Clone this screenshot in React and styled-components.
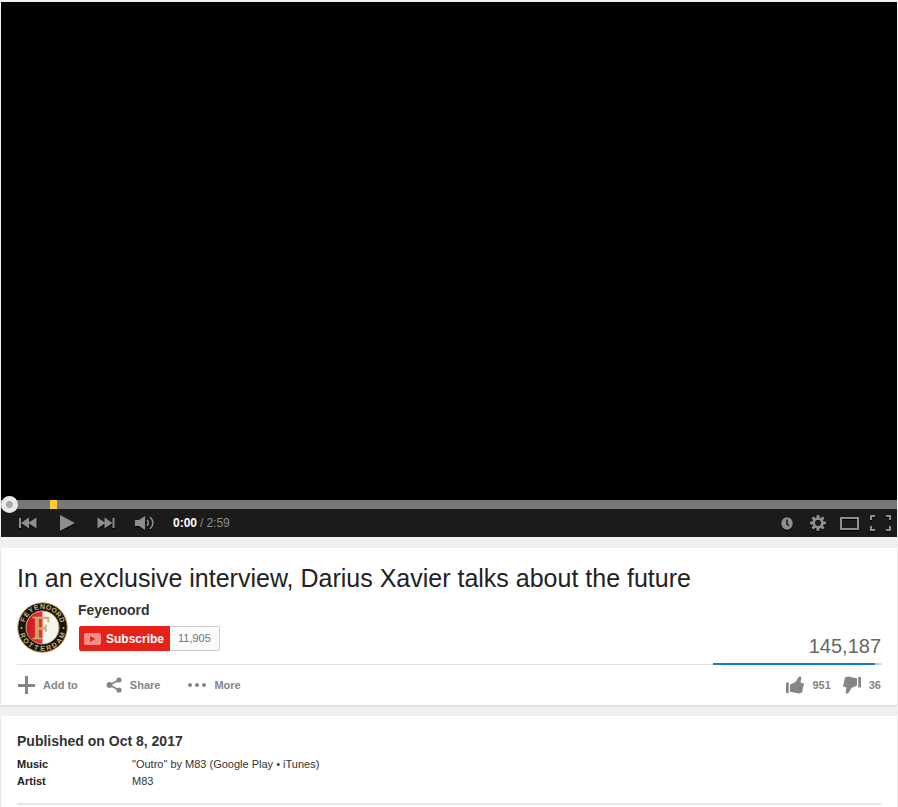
import React, { useState } from 'react';
import styled, { createGlobalStyle } from 'styled-components';

const GlobalStyle = createGlobalStyle`
  * {
    box-sizing: border-box;
  }
  body {
    margin: 0;
    background: #f0f0f0;
    color: #222;
    font-family: "Liberation Sans", Arial, Helvetica, sans-serif;
    font-size: 11px;
  }
`;

const Page = styled.main`
  display: flex;
  flex-direction: column;
  min-height: 100vh;
  padding: 2px 1px 0;
`;

/* ---------- player ---------- */

const Player = styled.section`
  background: #000;
  margin-bottom: 11px;
`;

const Screen = styled.div`
  aspect-ratio: 896 / 498;
  background: #000;
`;

const SeekBar = styled.div`
  position: relative;
  height: 9px;
  background: #777;
`;

const Marker = styled.span`
  position: absolute;
  top: 0;
  width: 7px;
  height: 9px;
  background: #fc3;
`;

const Seek = styled.input`
  position: absolute;
  top: -4px;
  left: 0;
  width: 100%;
  height: 17px;
  margin: 0;
  background: transparent;
  appearance: none;
  cursor: pointer;

  &::-webkit-slider-thumb {
    appearance: none;
    width: 17px;
    height: 17px;
    border-radius: 50%;
    background: radial-gradient(circle, #aaa 0 3px, #eaeaea 4px);
  }
`;

const Controls = styled.div`
  display: flex;
  align-items: center;
  justify-content: space-between;
  height: 28px;
  padding: 0 6px 0 16px;
  background: #1b1b1b;
`;

const ControlGroup = styled.div`
  display: flex;
  align-items: center;
  gap: ${props => props.$gap}px;
`;

const IconButton = styled.button`
  display: flex;
  align-items: center;
  justify-content: center;
  width: 22px;
  height: 28px;
  padding: 0;
  border: 0;
  background: none;
  color: #8e8e8e;
  cursor: pointer;

  svg {
    filter: drop-shadow(0 1px 0 #000);
  }
`;

const Time = styled.div`
  display: flex;
  gap: 3px;
  font-size: 12px;
  line-height: 28px;
  color: #8e8e8e;

  b {
    color: #fff;
  }
`;

/* ---------- cards ---------- */

const Card = styled.section`
  padding: 15px 16px 0;
  background: #fff;
  box-shadow: 0 1px 2px rgba(0, 0, 0, 0.12);
`;

const Details = styled(Card)`
  flex: 1;
  margin-top: 11px;
  padding-top: 16px;
`;

const Title = styled.h1`
  margin: 0 0 9px;
  font-size: 25px;
  font-weight: normal;
  line-height: 30px;
`;

const Header = styled.div`
  display: flex;
  align-items: flex-end;
  justify-content: space-between;
  border-bottom: 1px solid #e0e0e0;
`;

const Owner = styled.div`
  display: flex;
  gap: 10px;
  padding-bottom: 11px;
`;

const OwnerName = styled.a`
  display: block;
  margin-bottom: 8px;
  font-size: 14px;
  font-weight: bold;
  line-height: 16px;
  color: #333;
  text-decoration: none;
`;

const SubscribeRow = styled.div`
  display: flex;
  padding-left: 1px;
`;

const Subscribe = styled.button`
  display: flex;
  align-items: center;
  gap: 5px;
  height: 25px;
  padding: 0 6px 0 5px;
  border: 0;
  border-radius: 2px 0 0 2px;
  background: #e62117;
  color: #fff;
  font-family: inherit;
  font-size: 12px;
  font-weight: bold;
  cursor: pointer;
`;

const SubCount = styled.span`
  height: 25px;
  padding: 0 8px;
  border: 1px solid #ccc;
  border-left: 0;
  border-radius: 0 2px 2px 0;
  background: #fafafa;
  color: #737373;
  line-height: 23px;
`;

const Stats = styled.div`
  width: 168px;
  margin-bottom: -1px;
`;

const Views = styled.div`
  margin-bottom: 5px;
  font-size: 20px;
  line-height: 24px;
  color: #666;
  text-align: right;
`;

const Sentiment = styled.div`
  height: 2px;
  background: #ccc;
`;

const Likes = styled.div`
  height: 2px;
  background: #167ac6;
`;

const Actions = styled.div`
  display: flex;
  align-items: center;
  justify-content: space-between;
  height: 40px;
`;

const ActionGroup = styled.div`
  display: flex;
  gap: ${props => props.$gap}px;
`;

const Action = styled.button`
  display: flex;
  align-items: center;
  gap: 8px;
  height: 24px;
  padding: 0;
  border: 0;
  background: none;
  color: #858585;
  font-family: inherit;
  font-size: 11px;
  font-weight: bold;
  cursor: pointer;
`;

const Published = styled.h2`
  margin: 0 0 6px;
  font-size: 14px;
  line-height: 18px;
  color: #333;
`;

const Meta = styled.dl`
  display: grid;
  grid-template-columns: 115px 1fr;
  margin: 0 0 13px;
  line-height: 17px;

  dt {
    font-weight: bold;
  }
  dd {
    margin: 0;
    color: #333;
  }
`;

const Divider = styled.hr`
  height: 2px;
  margin: 0 0 3px;
  border: 0;
  background: #e6e6e6;
`;

/* ---------- icons ---------- */

const PrevIcon = () => (
  <svg width="18" height="12" fill="currentColor" aria-hidden="true">
    <path d="M0 1h2v10H0zM2 6l8-5.5v11zM9 6l8.500-5.500v11z" />
  </svg>
);

const NextIcon = () => (
  <svg width="18" height="12" fill="currentColor" aria-hidden="true">
    <path d="M15.500 1h2v10h-2zM15.500 6l-8-5.500v11zM8.500 6L.5.5v11z" />
  </svg>
);

const PlayIcon = () => (
  <svg width="15" height="16" fill="currentColor" aria-hidden="true">
    <path d="M0 0l15 8-15 8z" />
  </svg>
);

const VolumeIcon = () => (
  <svg width="20" height="14" fill="currentColor" aria-hidden="true">
    <path d="M0 4h4l6-4v14l-6-4H0z" />
    <path d="M12 4q2.500 3 0 6M15 1q6 6 0 12" fill="none" stroke="currentColor" strokeWidth="1.600" />
  </svg>
);

const ClockIcon = () => (
  <svg width="12" height="13" aria-hidden="true">
    <ellipse cx="6" cy="6.500" rx="5.700" ry="6.200" fill="currentColor" />
    <path d="M6 2.500v4.500l1.800 2" fill="none" stroke="#1b1b1b" strokeWidth="1.600" />
  </svg>
);

const GearIcon = () => (
  <svg width="16" height="16" viewBox="-8 -8 16 16" aria-hidden="true">
    <circle r="4.300" fill="none" stroke="currentColor" strokeWidth="2.800" />
    {[0, 45, 90, 135, 180, 225, 270, 315].map(a => (
      <path key={a} d="M-1.700-5L-1.200-8h2.400l.5 3z" fill="currentColor" transform={`rotate(${a})`} />
    ))}
  </svg>
);

const TheaterIcon = () => (
  <svg width="19" height="13" aria-hidden="true">
    <rect x="1" y="1" width="17" height="11" fill="none" stroke="currentColor" strokeWidth="2" />
  </svg>
);

const FullscreenIcon = () => (
  <svg width="21" height="16" fill="none" stroke="currentColor" strokeWidth="2" aria-hidden="true">
    <path d="M1 5V1h4M16 1h4v4M20 11v4h-4M5 15H1v-4" />
  </svg>
);

const PlusIcon = () => (
  <svg width="18" height="18" fill="currentColor" aria-hidden="true">
    <path d="M8 0h3v8h7v3h-7v7H8v-7H1V8h7z" />
  </svg>
);

const ShareIcon = () => (
  <svg width="16" height="16" fill="currentColor" aria-hidden="true">
    <path d="M13 3L3.500 8l9.500 5" fill="none" stroke="currentColor" strokeWidth="1.800" />
    <circle cx="13" cy="3" r="2.600" />
    <circle cx="3.500" cy="8" r="2.900" />
    <circle cx="13" cy="13" r="2.600" />
  </svg>
);

const MoreIcon = () => (
  <svg width="18" height="4" fill="currentColor" aria-hidden="true">
    <circle cx="2" cy="2" r="2" />
    <circle cx="9" cy="2" r="2" />
    <circle cx="16" cy="2" r="2" />
  </svg>
);

const ThumbIcon = ({ down }) => (
  <svg width="18" height="18" fill="currentColor" aria-hidden="true">
    <path
      d="M0 6.500h2.800v10.500H0zM4 8.500L9.500 6 13 .5l2.500.3-1 5.700 3.500 1-2 9-3 1-9-1.700z"
      transform={down ? 'rotate(180 9 9)' : undefined}
    />
  </svg>
);

const SubscribeIcon = () => (
  <svg width="17" height="12" aria-hidden="true">
    <rect width="17" height="12" rx="2" fill="#f58f8a" />
    <path d="M6 3l5.500 3L6 9z" fill="#e62117" />
  </svg>
);

// letters stand one by one round the ring, 17 degrees apart
const Crest = () => (
  <svg width="51" height="51" viewBox="0 0 51 51" role="img" aria-label="Feyenoord Rotterdam">
    <defs>
      <linearGradient id="gold" x1="0" y1="0" x2="1" y2="1">
        <stop offset="0" stopColor="#e6cf96" />
        <stop offset="0.500" stopColor="#b08d45" />
        <stop offset="1" stopColor="#dcc182" />
      </linearGradient>
      <linearGradient id="red" x1="0" y1="0" x2="1" y2="0">
        <stop offset="0" stopColor="#c8151d" />
        <stop offset="1" stopColor="#e8343b" />
      </linearGradient>
    </defs>
    <circle cx="25.500" cy="25.500" r="24.800" fill="#17140f" stroke="url(#gold)" strokeWidth="1" />
    <circle cx="25.500" cy="25.500" r="16.500" fill="#f6f4f1" />
    <path d="M25.500 9a16.500 16.500 0 0 0 0 33z" fill="url(#red)" />
    <circle cx="25.500" cy="25.500" r="16.500" fill="none" stroke="url(#gold)" strokeWidth="1" />
    <g fill="#c9b27b" fontFamily="Liberation Sans, sans-serif" fontWeight="bold" fontSize="7" textAnchor="middle">
      {'FEYENOORD'.split('').map((letter, i) => (
        <text key={i} x="25.500" y="7" transform={`rotate(${(i - 4) * 17} 25.500 25.500)`}>{letter}</text>
      ))}
      {'ROTTERDAM'.split('').map((letter, i) => (
        <text key={i} x="25.500" y="49" transform={`rotate(${(4 - i) * 17} 25.500 25.500)`}>{letter}</text>
      ))}
    </g>
    <circle cx="4.500" cy="26" r="1" fill="#d5bd82" />
    <circle cx="46.500" cy="26" r="1" fill="#d5bd82" />
    <text
      x="24"
      y="37"
      fill="#c9a860"
      stroke="#d3b574"
      strokeWidth="0.500"
      fontFamily="Liberation Serif, serif"
      fontSize="33"
      textAnchor="middle"
    >
      F
    </text>
  </svg>
);

const video = {
  title: 'In an exclusive interview, Darius Xavier talks about the future',
  likes: 951,
  dislikes: 36
};

function App() {
  const [position, setPosition] = useState(0);
  const likeShare = (video.likes / (video.likes + video.dislikes)) * 100;
  const seconds = String(position % 60).padStart(2, '0');

  return (
    <>
      <GlobalStyle />
      <Page>
        <Player>
          <Screen />
          <SeekBar>
            <Marker style={{ left: `${(10 / 179) * 98}%` }} />
            <Seek
              type="range"
              aria-label="Seek"
              min="0"
              max="179"
              value={position}
              onChange={e => setPosition(Number(e.target.value))}
            />
          </SeekBar>
          <Controls>
            <ControlGroup $gap={17}>
              <IconButton aria-label="Previous"><PrevIcon /></IconButton>
              <IconButton aria-label="Play"><PlayIcon /></IconButton>
              <IconButton aria-label="Next"><NextIcon /></IconButton>
              <IconButton aria-label="Mute"><VolumeIcon /></IconButton>
              <Time>
                <b>{Math.floor(position / 60)}:{seconds}</b>
                <span>/</span>
                <span>2:59</span>
              </Time>
            </ControlGroup>
            <ControlGroup $gap={9}>
              <IconButton aria-label="Watch later"><ClockIcon /></IconButton>
              <IconButton aria-label="Settings"><GearIcon /></IconButton>
              <IconButton aria-label="Theater mode"><TheaterIcon /></IconButton>
              <IconButton aria-label="Full screen"><FullscreenIcon /></IconButton>
            </ControlGroup>
          </Controls>
        </Player>

        <Card>
          <Title>{video.title}</Title>
          <Header>
            <Owner>
              <Crest />
              <div>
                <OwnerName href="#channel">Feyenoord</OwnerName>
                <SubscribeRow>
                  <Subscribe><SubscribeIcon />Subscribe</Subscribe>
                  <SubCount>11,905</SubCount>
                </SubscribeRow>
              </div>
            </Owner>
            <Stats>
              <Views>145,187</Views>
              <Sentiment>
                <Likes style={{ width: `${likeShare}%` }} />
              </Sentiment>
            </Stats>
          </Header>
          <Actions>
            <ActionGroup $gap={28}>
              <Action><PlusIcon />Add to</Action>
              <Action><ShareIcon />Share</Action>
              <Action><MoreIcon />More</Action>
            </ActionGroup>
            <ActionGroup $gap={12}>
              <Action><ThumbIcon />{video.likes}</Action>
              <Action><ThumbIcon down />{video.dislikes}</Action>
            </ActionGroup>
          </Actions>
        </Card>

        <Details>
          <Published>Published on Oct 8, 2017</Published>
          <Meta>
            <dt>Music</dt>
            <dd>"Outro" by M83 (Google Play • iTunes)</dd>
            <dt>Artist</dt>
            <dd>M83</dd>
          </Meta>
          <Divider />
        </Details>
      </Page>
    </>
  );
}

export default App;
